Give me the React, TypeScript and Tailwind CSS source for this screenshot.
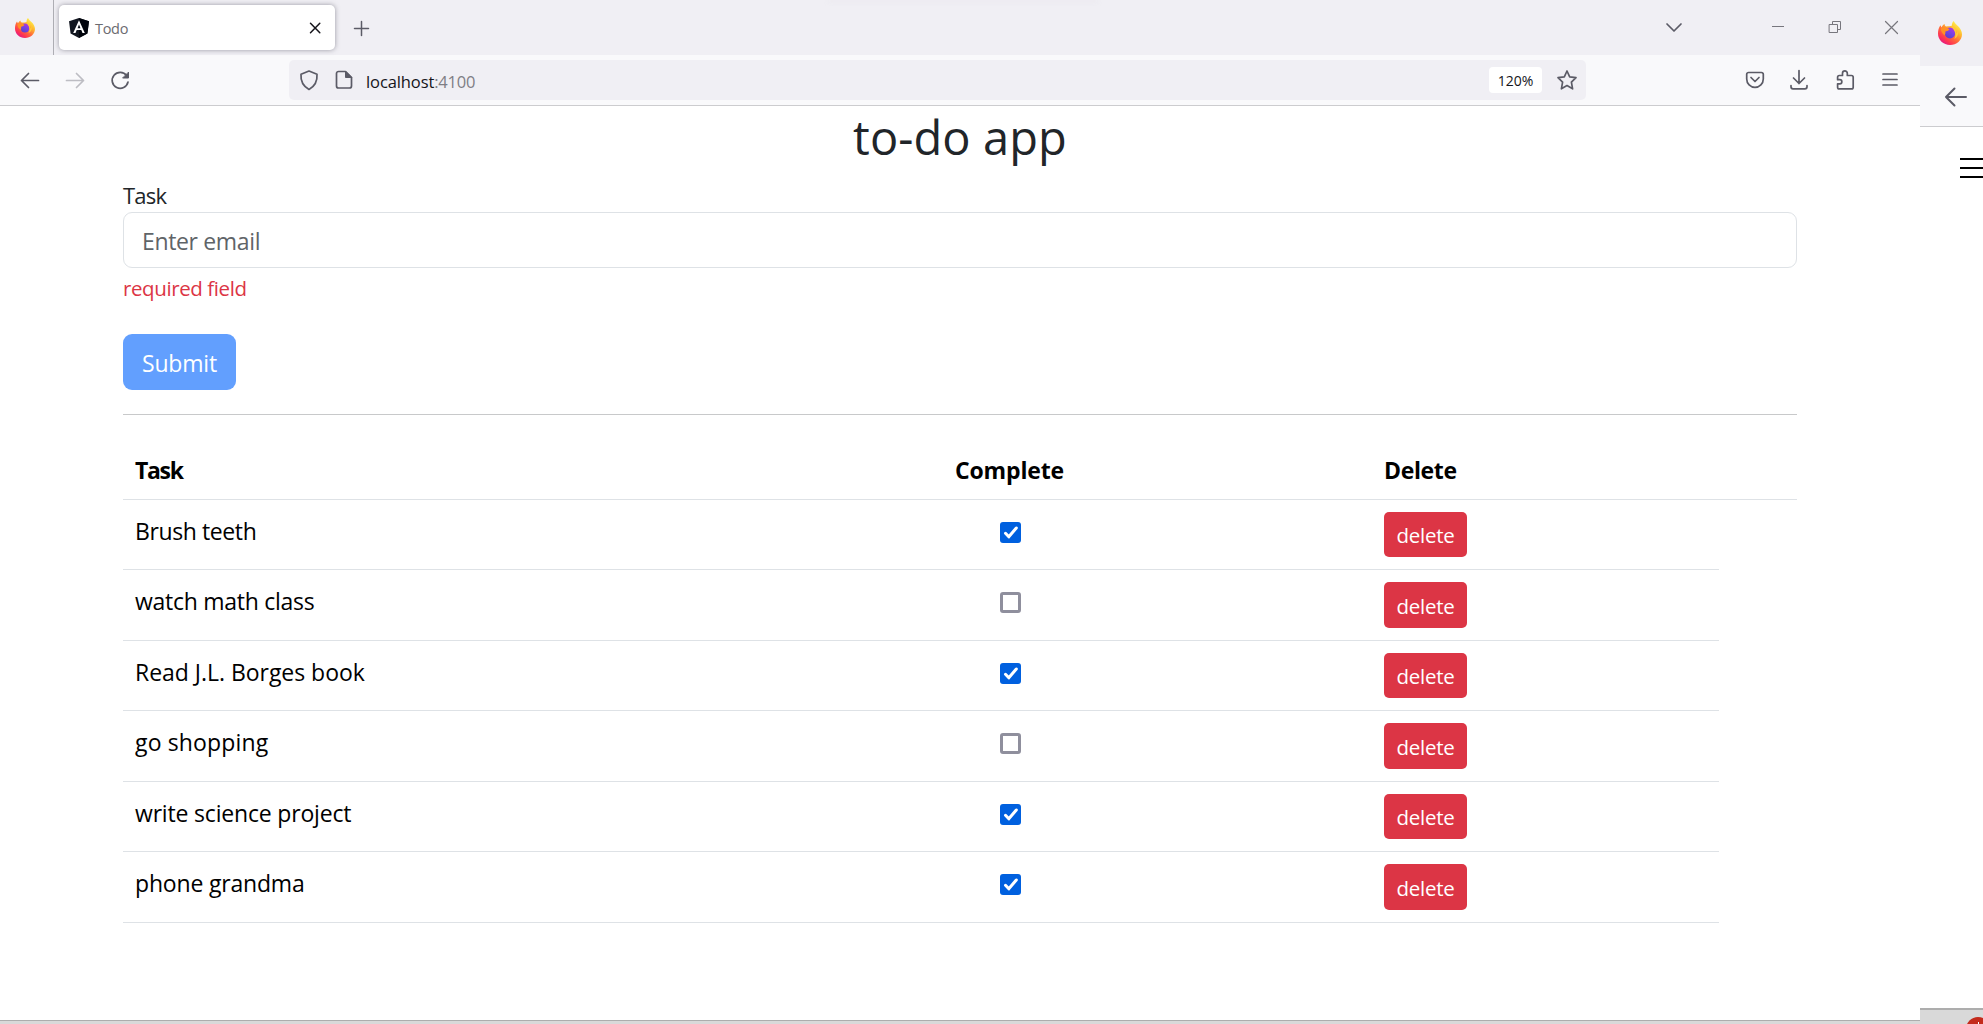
import React, { useState } from "react";

function Icon({ children, className = "" }: { children: React.ReactNode; className?: string }) {
  return (
    <svg
      viewBox="0 0 24 24"
      fill="none"
      stroke="currentColor"
      strokeWidth={1.7}
      strokeLinecap="round"
      strokeLinejoin="round"
      className={`block h-6 w-6 shrink-0 ${className}`}
    >
      {children}
    </svg>
  );
}

function FirefoxLogo({ id, className }: { id: string; className: string }) {
  return (
    <svg viewBox="0 0 40 40" className={`block shrink-0 ${className}`}>
      <defs>
        <linearGradient id={`${id}-body`} x1="0.85" y1="0.1" x2="0.2" y2="0.95">
          <stop offset="0" stopColor="#fff44f" />
          <stop offset="0.3" stopColor="#ffb92e" />
          <stop offset="0.55" stopColor="#ff7139" />
          <stop offset="0.8" stopColor="#ff3750" />
          <stop offset="1" stopColor="#e31587" />
        </linearGradient>
        <linearGradient id={`${id}-globe`} x1="0.8" y1="0" x2="0.2" y2="1">
          <stop offset="0" stopColor="#b833e1" />
          <stop offset="0.5" stopColor="#7542e5" />
          <stop offset="1" stopColor="#5b3fc4" />
        </linearGradient>
      </defs>
      <path
        d="M26 0c2 4 5 6 8 9 3 3 6 8 6 13 0 10-9 18-20 18S0 32 0 21C0 16 1 11 4 7l2 4c1-3 3-5 5-6 0 2 1 4 3 4 4 0 6 0 9-1 0-3 1-6 3-8z"
        fill={`url(#${id}-body)`}
      />
      <circle cx="20" cy="20" r="9" fill={`url(#${id}-globe)`} />
      <path d="M5 12c4-3 10-2 14 2-2 3-5 2-7 4 1 2 0 4-1 6-3-3-7-7-6-12z" fill="#ff9025" />
      <path d="M22 9c6 1 9 6 8 12 2-1 3-3 3-5 2 6-1 12-6 14 4-6 2-14-5-21z" fill="#ffc83a" />
    </svg>
  );
}

function AngularLogo() {
  return (
    <svg viewBox="0 0 20 20" className="block h-5 w-5 shrink-0">
      <path d="M10 0l10 3.2-1.6 12.3L10 20l-8.400-4.500L0 3.200z" fill="#11151f" />
      <path d="M10 0l10 3.2-1.6 12.3L10 20z" fill="#01040c" />
      <path d="M10 2.200L4.200 14.900h2.300l1.200-2.900h4.600l1.200 2.900h2.300zm0 4.300l1.500 3.700h-3z" fill="#fff" fillRule="evenodd" />
    </svg>
  );
}

function TabStrip() {
  return (
    <div className="relative flex h-[55px] shrink-0 items-center bg-[#f0eff4] text-[#5b5b66]">
      <div className="absolute left-[828px] top-0 h-[2px] w-[270px] bg-[#e9e8ed] blur-[2px]" />
      <FirefoxLogo id="fx-tab" className="ml-[15px] h-5 w-5" />
      <div className="ml-[18px] h-full w-px bg-[#aeaeb4]" />
      <div className="ml-[5px] flex h-[45px] w-[276px] items-center rounded-[5px] bg-white pl-[10px] pr-[8px] shadow-[0_0_5px_rgba(80,80,95,0.55)]">
        <AngularLogo />
        <span className="ml-[6px] mt-[2px] flex-1 text-[14.500px] leading-5 tracking-[-0.3px] text-[#6b6b70]">Todo</span>
        <Icon className="text-[#15141a]">
          <path d="M7.500 7.200l9.300 9.600M16.800 7.200l-9.300 9.600" strokeWidth={1.5} />
        </Icon>
      </div>
      <Icon className="ml-[14px]">
        <path d="M12.500 5.500v14M5.500 12.500h14" strokeWidth={1.5} />
      </Icon>
      <div className="flex-1" />
      <Icon>
        <path d="M5 8l7 7 7-7" strokeWidth={1.7} />
      </Icon>
      <Icon className="ml-20 text-[#77767d]">
        <path d="M6.500 10.500h11" strokeWidth={1} strokeLinecap="square" />
      </Icon>
      <Icon className="ml-[33px] text-[#77767d]">
        <path d="M6.500 8.500h8v8h-8zM9.500 8.500v-3h8v8h-3" strokeWidth={1} strokeLinejoin="miter" />
      </Icon>
      <Icon className="ml-[33px] mr-4 text-[#77767d]">
        <path d="M5.500 5.500l12 12M17.500 5.500l-12 12" strokeWidth={1.2} />
      </Icon>
    </div>
  );
}

function Toolbar() {
  return (
    <div className="flex h-[51px] shrink-0 items-center border-b border-[#cccccf] bg-[#f9f9fb] text-[#5b5b66]">
      <Icon className="ml-[18px]">
        <path d="M20.500 12.500h-17M10.500 5.500l-7 7 7 7" />
      </Icon>
      <Icon className="ml-[21px] text-[#bdbdc3]">
        <path d="M3.500 12.500h17M13.500 5.500l7 7-7 7" />
      </Icon>
      <Icon className="ml-[21px]">
        <path d="M18.600 7.500A8 8 0 1 0 20 14" />
        <path d="M20.500 4.500v5.500H15z" fill="currentColor" strokeWidth={1} />
      </Icon>
      <div className="ml-[157px] flex h-10 w-[1297px] items-center rounded-[5px] bg-[#f0eff4]">
        <Icon className="ml-2">
          <path d="M12 3l8 3.200c.5 6.300-1.500 11.500-8 15.300C5.500 17.700 3.500 12.500 4 6.200z" />
        </Icon>
        <Icon className="ml-[11px]">
          <path d="M13.500 3.500H6.500a2 2 0 0 0-2 2v12.500a2 2 0 0 0 2 2h11a2 2 0 0 0 2-2V9.500z" />
          <path d="M13.500 3.500v6h6z" fill="currentColor" strokeWidth={1} />
        </Icon>
        <div className="ml-[10px] mt-[3px] flex-1 text-[16.500px] leading-6">
          <span className="tracking-[-0.1px] text-[#15141a]">localhost</span>
          <span className="tracking-[-0.2px] text-[#7f7e85]">:4100</span>
        </div>
        <div className="flex h-[26px] w-[53px] items-center justify-center rounded-[4px] bg-white pt-px text-sm text-[#15141a]">120%</div>
        <Icon className="ml-[13px] mr-[7px]">
          <path d="M12 3l2.700 5.900 6.300.8-4.600 4.500 1.200 6.600-5.600-3.200-5.600 3.200 1.200-6.600L3 9.700l6.300-.8z" />
        </Icon>
      </div>
      <div className="flex-1" />
      <Icon>
        <path d="M5.500 4.500h13a1.800 1.800 0 0 1 1.800 1.800V11a8.300 8.300 0 0 1-16.600 0V6.300a1.800 1.800 0 0 1 1.800-1.800z" />
        <path d="M8 9.500l4 4 4-4" />
      </Icon>
      <Icon className="ml-5">
        <path d="M12 2.500v13M6.500 10l5.500 5.500L17.500 10M4 17.500v1.300c0 1.200.8 2 2 2h12c1.200 0 2-.8 2-2v-1.300" />
      </Icon>
      <Icon className="ml-[22px]">
        <path d="M9.500 7.500V5.300a2.400 2.400 0 0 1 4.800 0v2.200h4.200c1 0 1.700.7 1.700 1.700v10c0 1-.7 1.700-1.700 1.700H6.300c-1 0-1.700-.7-1.700-1.700v-3.400h2.200a2 2 0 0 0 0-4.100H4.600V9.200c0-1 .7-1.700 1.700-1.700z" />
      </Icon>
      <Icon className="ml-[21px] mr-[18px]">
        <path d="M5 6h14M5 11.500h14M5 17h14" />
      </Icon>
    </div>
  );
}

type Task = { id: number; name: string; complete: boolean; tracking: string; height: string };

const initialTasks: Task[] = [
  { id: 1, name: "Brush teeth", complete: true, tracking: "tracking-[-0.4px]", height: "h-[70px]" },
  { id: 2, name: "watch math class", complete: false, tracking: "tracking-[-0.27px]", height: "h-[71px]" },
  { id: 3, name: "Read J.L. Borges book", complete: true, tracking: "tracking-[-0.03px]", height: "h-[70px]" },
  { id: 4, name: "go shopping", complete: false, tracking: "tracking-[0.14px]", height: "h-[71px]" },
  { id: 5, name: "write science project", complete: true, tracking: "tracking-[-0.18px]", height: "h-[70px]" },
  { id: 6, name: "phone grandma", complete: true, tracking: "tracking-[-0.18px]", height: "h-[71px]" },
];

function Checkbox({ checked, onToggle }: { checked: boolean; onToggle: () => void }) {
  return (
    <button
      role="checkbox"
      aria-checked={checked}
      onClick={onToggle}
      className={
        checked
          ? "flex h-[21px] w-[21px] items-center justify-center rounded-[3px] bg-[#0060df]"
          : "h-[21px] w-[21px] rounded-[3px] border-3 border-[#8f8f9d] bg-white"
      }
    >
      {checked && (
        <svg viewBox="0 0 21 21" className="h-[21px] w-[21px]" fill="none" stroke="#fff" strokeWidth="3" strokeLinecap="round" strokeLinejoin="round">
          <path d="M5.500 11.300l3.300 3.500L16.300 6" />
        </svg>
      )}
    </button>
  );
}

function TodoPage() {
  const [tasks, setTasks] = useState(initialTasks);
  const toggle = (id: number) => setTasks(tasks.map((t) => (t.id === id ? { ...t, complete: !t.complete } : t)));
  const remove = (id: number) => setTasks(tasks.filter((t) => t.id !== id));

  return (
    <main className="flex flex-1 flex-col bg-white px-[123px] text-[23px] text-[#212529]">
      <h1 className="h-[60px] text-center text-[47px] leading-[63px] tracking-[0.09px]">to-do app</h1>
      <label className="mt-3 h-[34px] text-[22px] leading-[35px] tracking-[-0.8px]">Task</label>
      <input
        placeholder="Enter email"
        className="h-14 w-full rounded-[9px] border border-[#dee2e6] px-[18px] pt-px tracking-[-0.35px] outline-none placeholder:text-[#5f6468]"
      />
      <p className="mt-[5px] h-[30px] text-[20.500px] leading-[30px] tracking-[-0.4px] text-[#dc3545]">required field</p>
      <button className="mt-[31px] h-14 w-[113px] rounded-[9px] bg-[#629ffe] pt-[3px] tracking-[-0.2px] text-white">Submit</button>
      <hr className="mt-6 h-px border-0 bg-[#c8c9ca]" />

      <div className="mt-[27px] text-black">
        <div className="flex h-[58px] items-center border-b border-[#dee2e6] pl-3 font-bold">
          <span className="w-[808px] tracking-[-1.300px]">Task</span>
          <span className="w-[133px] text-center tracking-[-0.15px]">Complete</span>
          <span className="ml-[308px] tracking-[-0.35px]">Delete</span>
        </div>
        {tasks.map((task) => (
          <div key={task.id} className={`flex w-[1596px] items-stretch border-b border-[#dee2e6] py-3 pl-3 ${task.height}`}>
            <span className={`w-[809px] leading-[38px] ${task.tracking}`}>{task.name}</span>
            <span className="flex w-[133px] justify-center pt-[10px]">
              <Checkbox checked={task.complete} onToggle={() => toggle(task.id)} />
            </span>
            <button
              onClick={() => remove(task.id)}
              className="ml-[307px] w-[83px] rounded-[5px] bg-[#dc3545] pt-px text-[20.500px] leading-6 tracking-[-0.25px] text-white"
            >
              delete
            </button>
          </div>
        ))}
      </div>
    </main>
  );
}

function BackWindow() {
  return (
    <aside className="flex w-[63px] shrink-0 flex-col overflow-hidden bg-white">
      <div className="h-[66px] shrink-0 bg-[#f0eff4] pl-[18px] pt-[21px]">
        <FirefoxLogo id="fx-back" className="h-6 w-6" />
      </div>
      <div className="flex h-[61px] shrink-0 items-center border-b border-[#cccccf] bg-[#f9f9fb] pl-[22px] text-[#5b5b66]">
        <svg viewBox="0 0 28 28" className="h-7 w-7" fill="none" stroke="currentColor" strokeWidth={2} strokeLinecap="round" strokeLinejoin="round">
          <path d="M24 15H4M12.500 6.500L4 15l8.500 8.500" />
        </svg>
      </div>
      <div className="ml-10 mt-[31px] flex flex-col gap-[7px]">
        <div className="h-[2px] bg-black" />
        <div className="h-[2px] bg-black" />
        <div className="h-[2px] bg-black" />
      </div>
      <div className="flex-1" />
      <div className="h-4 overflow-hidden border-t-2 border-[#adadad] bg-[#d9d9d9] pl-[46px] pt-[7px]">
        <div className="h-6 w-6 rounded-full bg-[#c42b1c]">
          <div className="ml-3 h-[7px] w-px pt-[5px]">
            <div className="h-[2px] w-px bg-white" />
          </div>
        </div>
      </div>
    </aside>
  );
}

export default function App() {
  return (
    <div className="flex h-[1024px] w-[1983px] overflow-hidden bg-white font-['Open_Sans','Noto_Sans',sans-serif]">
      <div className="flex w-[1920px] shrink-0 flex-col">
        <TabStrip />
        <Toolbar />
        <TodoPage />
        <div className="h-1 shrink-0 border-t border-[#adadad] bg-[#d9d9d9]" />
      </div>
      <BackWindow />
    </div>
  );
}
